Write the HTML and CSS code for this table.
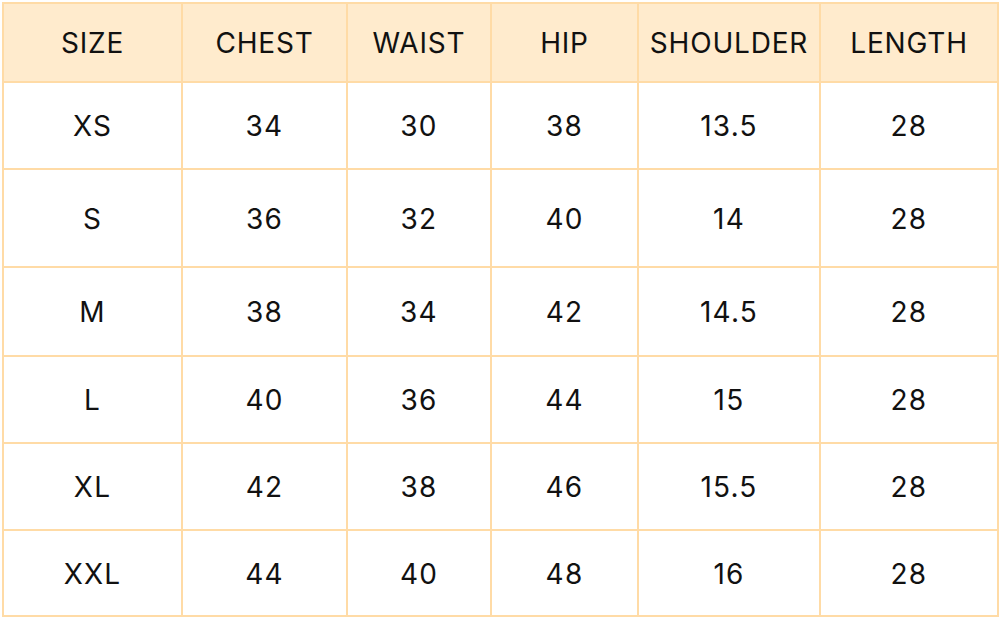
FILE: index.html
```html
<!DOCTYPE html>
<html>
<head>
<meta charset="utf-8">
<link rel="stylesheet" href="styles.css">
</head>
<body>
<div class="chart">
  <div class="cell head">SIZE</div><div class="cell head">CHEST</div><div class="cell head">WAIST</div><div class="cell head">HIP</div><div class="cell head">SHOULDER</div><div class="cell head">LENGTH</div>
  <div class="cell">XS</div><div class="cell">34</div><div class="cell">30</div><div class="cell">38</div><div class="cell">13.5</div><div class="cell">28</div>
  <div class="cell">S</div><div class="cell">36</div><div class="cell">32</div><div class="cell">40</div><div class="cell">14</div><div class="cell">28</div>
  <div class="cell">M</div><div class="cell">38</div><div class="cell">34</div><div class="cell">42</div><div class="cell">14.5</div><div class="cell">28</div>
  <div class="cell">L</div><div class="cell">40</div><div class="cell">36</div><div class="cell">44</div><div class="cell">15</div><div class="cell">28</div>
  <div class="cell">XL</div><div class="cell">42</div><div class="cell">38</div><div class="cell">46</div><div class="cell">15.5</div><div class="cell">28</div>
  <div class="cell">XXL</div><div class="cell">44</div><div class="cell">40</div><div class="cell">48</div><div class="cell">16</div><div class="cell">28</div>
</div>
</body>
</html>
```
FILE: styles.css
```css
html, body {
  margin: 0;
  padding: 0;
  background: #ffffff;
}
.chart {
  margin: 2px 0 0 2px;
  width: 993px;
  padding: 2px;
  background: #ffdba6;
  display: grid;
  grid-template-columns: 177px 163px 142px 145px 180px 176px;
  grid-template-rows: 77px 85px 96px 87px 85px 85px 84px;
  gap: 2px;
  font-family: "Inter", "Noto Sans", sans-serif;
  font-size: 28px;
  font-weight: 400;
  color: #111111;
}
.cell {
  background: #ffffff;
  display: flex;
  align-items: center;
  justify-content: center;
  padding-top: 1px;
  letter-spacing: 1.2px;
}
.head {
  background: #ffebcd;
  letter-spacing: 0.8px;
  padding-top: 0;
}
```
